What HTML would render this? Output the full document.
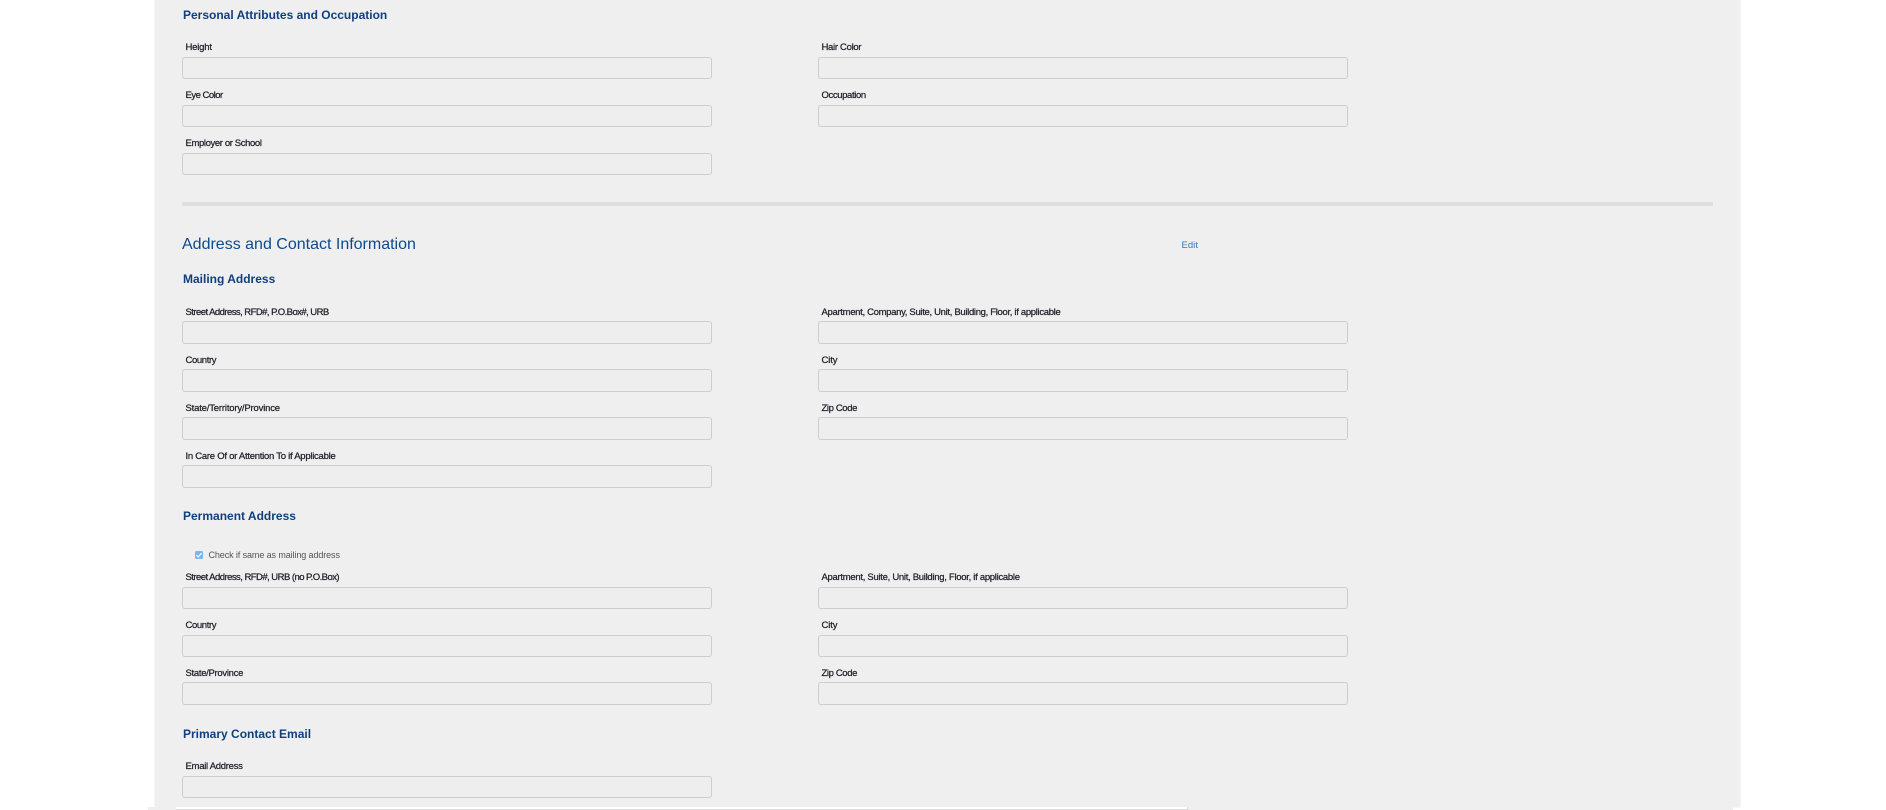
<!DOCTYPE html>
<html lang="en">
<head>
<meta charset="utf-8">
<title>Address and Contact Information</title>
<style>
html,body{margin:0;padding:0;background:#fff;width:1886px;height:810px;overflow:hidden}
body{position:relative;font-family:"Liberation Sans",Arial,sans-serif}
.panel{position:absolute;left:155px;top:0;width:1585px;height:807px;background:#efefef;box-shadow:0 0 2px #e2e2e2}
.a{position:absolute;white-space:nowrap}
.i{position:absolute;height:22px;box-sizing:border-box;border:1px solid #cdcdcd;border-radius:3px;background:#eee}
.i.l{left:182px;width:530px}
.i.r{left:818px;width:530px}
.t{position:absolute;white-space:nowrap;font-size:9.5px;line-height:12px;letter-spacing:-.38px;color:#22222c;-webkit-text-stroke:.25px #22222c}
.t.l{left:185.5px}
.t.r{left:821.5px}
.h{position:absolute;left:183px;white-space:nowrap;font-size:12px;line-height:16px;font-weight:bold;color:#0f3f7e}
</style>
</head>
<body>
<div class="panel"></div>
<div class="a" style="left:0;top:807px;width:148px;height:3px;background:#fff"></div>
<div class="a" style="left:148px;top:807px;width:28px;height:3px;background:#efefef"></div>
<div class="a" style="left:176px;top:807px;width:1012px;height:3px;box-sizing:border-box;background:#fff;border-bottom:1px solid #d8d8d8;border-right:1px solid #d8d8d8"></div>
<div class="a" style="left:1188px;top:807px;width:545px;height:3px;background:#efefef"></div>

<div class="h" style="top:7px">Personal Attributes and Occupation</div>

<div class="t l" style="top:42px;letter-spacing:-.2px">Height</div>
<div class="i l" style="top:57px"></div>
<div class="t r" style="top:42px;letter-spacing:-.3px">Hair Color</div>
<div class="i r" style="top:57px"></div>
<div class="t l" style="top:90px;letter-spacing:-.5px">Eye Color</div>
<div class="i l" style="top:105px"></div>
<div class="t r" style="top:90px">Occupation</div>
<div class="i r" style="top:105px"></div>
<div class="t l" style="top:138px">Employer or School</div>
<div class="i l" style="top:153px"></div>

<div class="a" style="left:182px;top:202px;width:1531px;height:4px;background:#dedede"></div>

<div class="a" style="left:182px;top:234px;font-size:16px;line-height:22px;color:#0d4a8c">Address and Contact Information</div>
<div class="a" style="left:1181.5px;top:239px;font-size:9.5px;line-height:13px;color:#337ab7">Edit</div>

<div class="h" style="top:271px">Mailing Address</div>

<div class="t l" style="top:307px;letter-spacing:-.55px">Street Address, RFD#, P.O.Box#, URB</div>
<div class="i l" style="top:321px;height:23px"></div>
<div class="t r" style="top:307px;letter-spacing:-.32px">Apartment, Company, Suite, Unit, Building, Floor, if applicable</div>
<div class="i r" style="top:321px;height:23px"></div>
<div class="t l" style="top:355px">Country</div>
<div class="i l" style="top:369px;height:23px"></div>
<div class="t r" style="top:355px;letter-spacing:-.1px">City</div>
<div class="i r" style="top:369px;height:23px"></div>
<div class="t l" style="top:403px;letter-spacing:-.18px">State/Territory/Province</div>
<div class="i l" style="top:417px;height:23px"></div>
<div class="t r" style="top:403px">Zip Code</div>
<div class="i r" style="top:417px;height:23px"></div>
<div class="t l" style="top:451px;letter-spacing:-.26px">In Care Of or Attention To if Applicable</div>
<div class="i l" style="top:465px;height:23px"></div>

<div class="h" style="top:508px">Permanent Address</div>

<div class="a" style="left:195px;top:551px;width:8px;height:8px;background:#7ab5f0;border-radius:1.5px">
<svg width="8" height="8" viewBox="0 0 8 8" style="display:block"><path d="M1.5 4.2 L3.2 5.9 L6.6 2.2" fill="none" stroke="#fff" stroke-width="1.2"/></svg>
</div>
<div class="a" style="left:208.5px;top:549px;font-size:9px;line-height:12px;color:#555;letter-spacing:-.1px">Check if same as mailing address</div>

<div class="t l" style="top:572px;letter-spacing:-.54px">Street Address, RFD#, URB (no P.O.Box)</div>
<div class="i l" style="top:587px"></div>
<div class="t r" style="top:572px;letter-spacing:-.29px">Apartment, Suite, Unit, Building, Floor, if applicable</div>
<div class="i r" style="top:587px"></div>
<div class="t l" style="top:620px">Country</div>
<div class="i l" style="top:635px"></div>
<div class="t r" style="top:620px;letter-spacing:-.1px">City</div>
<div class="i r" style="top:635px"></div>
<div class="t l" style="top:668px;letter-spacing:-.3px">State/Province</div>
<div class="i l" style="top:682px;height:23px"></div>
<div class="t r" style="top:668px">Zip Code</div>
<div class="i r" style="top:682px;height:23px"></div>

<div class="h" style="top:726px">Primary Contact Email</div>

<div class="t l" style="top:761px;letter-spacing:-.28px">Email Address</div>
<div class="i l" style="top:776px"></div>
</body>
</html>
